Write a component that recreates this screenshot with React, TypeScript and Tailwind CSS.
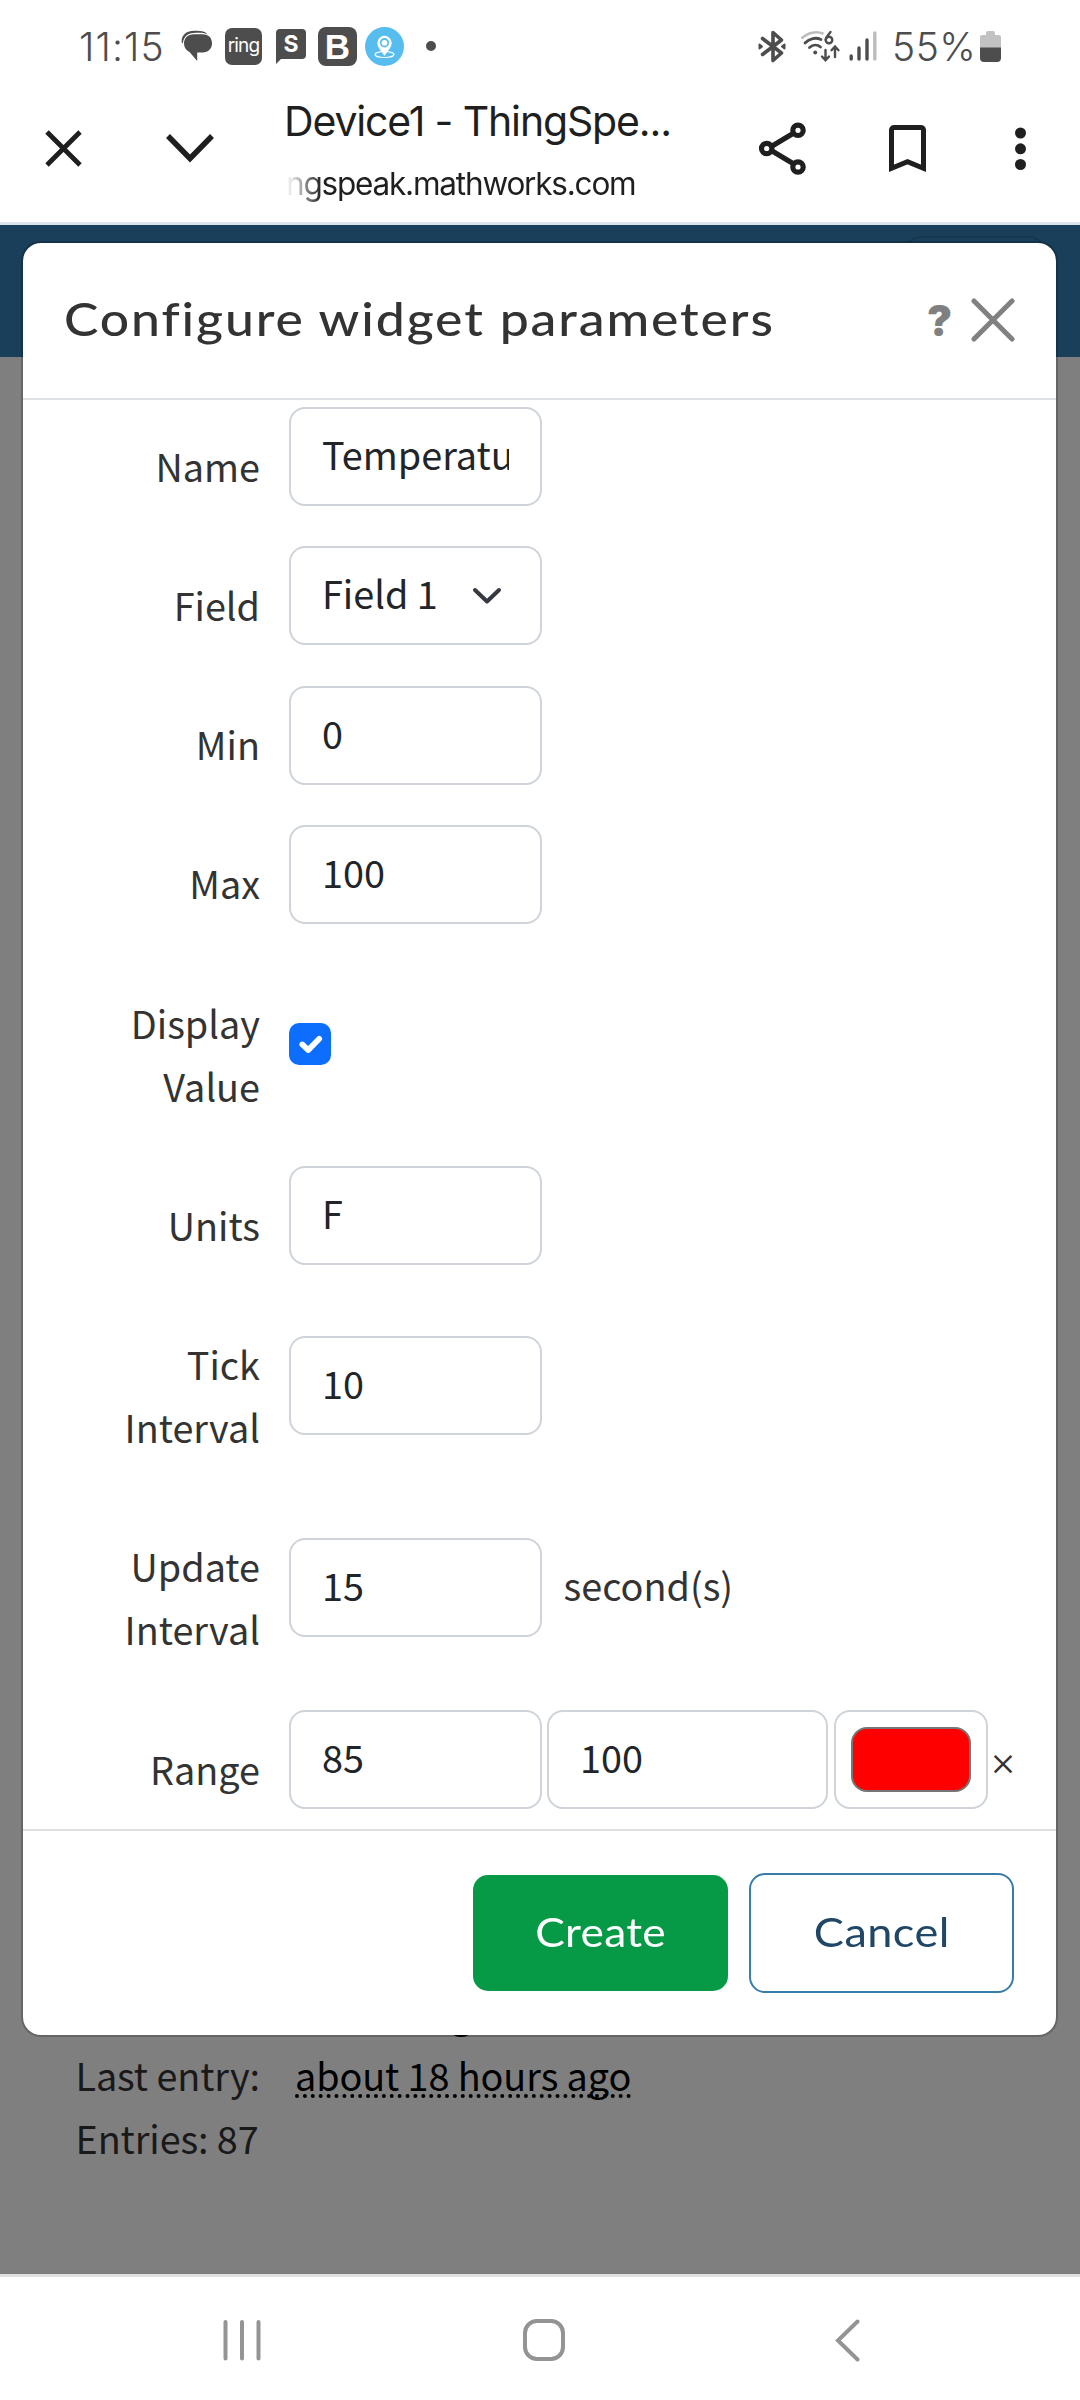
import React from "react";

const ui = "font-['Inter',sans-serif]";

function StatusBar() {
  return (
    <div className={`flex h-[92px] items-center bg-white pl-[79px] text-[#4d4d4d] ${ui}`}>
      <span className="w-[102px] whitespace-nowrap text-[39px] font-light leading-none tracking-[1.100px]">11:15</span>
      <svg className="h-[32px] w-[32px]" viewBox="0 0 32 32">
        <path d="M0.6 11.5C0.6 4.5 6 0.8 13 0.8h3c4.5 0 8.500.8 10.5 3.600C23.500 2.900 21 2.800 18 2.800h-3C8 2.800 2.600 5.500 1.800 13.500C1 13 .6 12.300.6 11.500Z" fill="#4d4d4d" />
        <path d="M12.500 4.200h9C27.800 4.200 31 8 31 13.200s-3.600 9.300-9.400 9.300H16.200V31L8.500 22C5 20.500 3 17.500 3 13.600C3 7.800 7 4.200 12.500 4.200Z" fill="#4d4d4d" />
      </svg>
      <span className="ml-[12px] flex h-[37px] w-[37px] items-center justify-center rounded-[7px] bg-[#4d4d4d] pb-[2px] text-[19px] leading-none tracking-[-0.800px] text-white">ring</span>
      <span className="relative ml-[14px] flex h-[36px] w-[30px] items-start justify-center">
        <svg className="absolute inset-0 h-[36px] w-[30px]" viewBox="0 0 30 36">
          <path d="M4 1h22a4 4 0 0 1 4 4v22a4 4 0 0 1-4 4H5l-5 5V5a4 4 0 0 1 4-4Z" fill="#4d4d4d" />
        </svg>
        <span className="relative mt-[5px] text-[23px] font-bold leading-none text-white">S</span>
      </span>
      <span className="ml-[12px] flex h-[39px] w-[39px] items-center justify-center rounded-[8px] bg-[#4d4d4d] font-['Liberation_Sans',sans-serif] text-[35px] font-bold leading-none text-white">B</span>
      <svg className="ml-[8px] h-[39px] w-[39px]" viewBox="0 0 39 39">
        <circle cx="19.500" cy="19.500" r="19.500" fill="#57bdee" />
        <ellipse cx="19.500" cy="27.500" rx="9.500" ry="3" fill="none" stroke="#fff" strokeWidth="1.200" />
        <path d="M19.500 29C16 23.500 12.300 20 12.300 16a7.200 7.200 0 0 1 14.400 0C26.700 20 23 23.500 19.500 29Z" fill="#fff" />
        <circle cx="19.500" cy="15.800" r="3.800" fill="#fff" stroke="#57bdee" strokeWidth="1.800" />
      </svg>
      <span className="ml-[22px] h-[10px] w-[10px] rounded-full bg-[#4d4d4d]" />
      <svg className="ml-[322px] h-[33px] w-[28px]" viewBox="0 0 28 33" fill="none" stroke="#4d4d4d" strokeWidth="3.600" strokeLinecap="round" strokeLinejoin="round">
        <path d="M4.500 8.500 23.500 23 15 30.500V2.500L23.500 10 4.500 24.500" />
        <path d="M1.500 14.500 4 16.500 1.500 18.500ZM26.500 14.500 24 16.500 26.500 18.500Z" strokeWidth="2" fill="#4d4d4d" />
      </svg>
      <svg className="ml-[13px] h-[34px] w-[42px]" viewBox="0 0 42 34" fill="none" strokeLinecap="round">
        <path d="M2.500 9.500C9 3 18 2 24.500 4.800" stroke="#bdbdbd" strokeWidth="2.600" strokeLinecap="butt" />
        <path d="M6 14C10.500 9 17 8.200 22 10.500" stroke="#4d4d4d" strokeWidth="2.800" />
        <path d="M10.500 18.500C14 15.500 18.500 15.500 21.500 18" stroke="#4d4d4d" strokeWidth="2.800" />
        <circle cx="16.200" cy="23.500" r="2" fill="#4d4d4d" />
        <path d="M31.500 3C29 6 26.800 8.500 26.800 10.800" stroke="#4d4d4d" strokeWidth="2.400" />
        <circle cx="30" cy="11" r="3.300" stroke="#4d4d4d" strokeWidth="2.400" />
        <path d="M26.500 21v10M23 27.500l3.500 3.700 3.500-3.700M36 28V18M32.500 21.200 36 17.500l3.500 3.700" stroke="#4d4d4d" strokeWidth="2.400" />
      </svg>
      <svg className="ml-[8px] h-[30px] w-[28px]" viewBox="0 0 28 30" strokeWidth="3.400" strokeLinecap="round">
        <path d="M2.200 25v3M10 17v11M18 9v19" stroke="#4d4d4d" />
        <path d="M25.800 2v26" stroke="#bdbdbd" />
      </svg>
      <span className="ml-[15px] w-[88px] whitespace-nowrap text-[39px] font-light leading-none tracking-[0.500px]">55%</span>
      <svg className="h-[31px] w-[21px]" viewBox="0 0 21 31">
        <path d="M6 2a2 2 0 0 1 2-2h5a2 2 0 0 1 2 2v2h4a2 2 0 0 1 2 2v11H0V6a2 2 0 0 1 2-2h4Z" fill="#c2c2c2" />
        <path d="M0 16.500h21V27a4 4 0 0 1-4 4H4a4 4 0 0 1-4-4Z" fill="#4d4d4d" />
      </svg>
    </div>
  );
}

function BrowserBar() {
  return (
    <div className={`flex h-[133px] border-b-[3px] border-[#dbe4ed] bg-white text-[#1f1f1f] ${ui}`}>
      <svg className="ml-[45px] mt-[38px] h-[37px] w-[37px]" viewBox="0 0 37 37" stroke="#1f1f1f" strokeWidth="4.800">
        <path d="M2 2 35 35M35 2 2 35" />
      </svg>
      <svg className="ml-[83px] mt-[41px] h-[31px] w-[50px]" viewBox="0 0 50 31" fill="none" stroke="#1f1f1f" strokeWidth="5.500">
        <path d="M3 3 25 25.500 47 3" />
      </svg>
      <div className="ml-[69px] w-[399px]">
        <div className="mt-[4px] whitespace-nowrap text-[41px] leading-[50px] tracking-[-1.150px]">Device1 - ThingSpe...</div>
        <div className="ml-[2px] mt-[16px] whitespace-nowrap bg-linear-to-r from-[#ffffff] from-0% via-[#a8a8a8] via-4% to-[#1f1f1f] to-9% bg-clip-text text-[31.500px] leading-[44px] tracking-[-1.200px] text-transparent">ngspeak.mathworks.com</div>
      </div>
      <svg className="ml-[75px] mt-[29px] h-[56px] w-[50px]" viewBox="0 0 50 56" fill="none" stroke="#1f1f1f" strokeWidth="5.200">
        <path d="M10 27.500 40 9.500M10 27.500 40 45.500" />
        <circle cx="40" cy="9.300" r="5.200" fill="#fff" />
        <circle cx="8.700" cy="27.500" r="5.200" fill="#fff" />
        <circle cx="40" cy="46" r="5.200" fill="#fff" />
      </svg>
      <svg className="ml-[81px] mt-[33px] h-[47px] w-[37px]" viewBox="0 0 37 47" fill="none" stroke="#1f1f1f" strokeWidth="5">
        <path d="M2.500 43.200V5a2.500 2.500 0 0 1 2.500-2.500h27a2.500 2.500 0 0 1 2.500 2.500v38.200L18.500 36.800Z" />
      </svg>
      <svg className="ml-[89px] mt-[35px] h-[44px] w-[11px]" viewBox="0 0 11 44" fill="#1f1f1f">
        <circle cx="5.500" cy="6" r="5.500" />
        <circle cx="5.500" cy="21.800" r="5.500" />
        <circle cx="5.500" cy="37.500" r="5.500" />
      </svg>
    </div>
  );
}

const box = "h-[99px] shrink-0 overflow-hidden rounded-[16px] border-2 border-[#ced4da] bg-white px-[31px] leading-[90px] text-[#212529]";

function Row({ label, children, tall, drop }: { label: string; children: React.ReactNode; tall?: boolean; drop?: boolean }) {
  return (
    <div className={tall ? "flex h-[202.300px] items-start" : "flex h-[139.250px] items-start"}>
      <div className="ml-[80px] mr-[29px] mt-[26.500px] w-[157px] shrink-0 text-right leading-[63px]">{label}</div>
      <div className={drop ? "mt-[30.500px] flex items-start" : "flex items-start"}>{children}</div>
    </div>
  );
}

function Field({ value }: { value: string }) {
  return (
    <div className={`${box} w-[253px]`}>
      <div className="overflow-hidden whitespace-nowrap">{value}</div>
    </div>
  );
}

export default function App() {
  return (
    <div className="flex h-[2400px] w-[1080px] flex-col overflow-hidden bg-white font-['Noto_Sans_CJK_SC',sans-serif] text-[37.800px] text-[#333333]">
      <StatusBar />
      <BrowserBar />
      <div className="relative flex h-[2049px] flex-col bg-[#7f7f7f]">
        <div className="h-[132px] bg-[#193f5a]">
          <div className="ml-[905px] mt-[11px] h-[60px] w-[140px] rounded-[16px] border-2 border-[#15384f]" />
        </div>
        <div className="ml-[75.500px] mt-[1608px] text-[#191919]">
          <div className="flex h-[78px] items-start pl-[375px] pt-[22px] leading-[50px] text-black">g</div>
          <div className="flex h-[63px] items-start leading-[63px]">
            <span className="w-[219.500px] whitespace-nowrap tracking-[-0.100px]">Last entry:</span>
            <span className="whitespace-nowrap tracking-[-0.100px] text-black underline decoration-dotted decoration-[4px] underline-offset-[3px] [text-decoration-skip-ink:none]">about 18 hours ago</span>
          </div>
          <div className="leading-[63px] tracking-[-0.100px]">Entries: 87</div>
        </div>
        <div className="absolute left-[21px] top-[16px] flex h-[1796px] w-[1037px] flex-col overflow-hidden rounded-[20px] border-2 border-black/20 bg-white bg-clip-padding">
          <div className="flex h-[157px] shrink-0 items-center border-b-2 border-[#dee2e6] pl-[41px] font-['Lato',sans-serif]">
            <h1 className="w-[863px] origin-left scale-x-[1.1] whitespace-nowrap pb-[4px] text-[47px] font-medium tracking-[1.700px] text-[#333333]">Configure widget parameters</h1>
            <span className="w-[44px] pb-[1px] font-['Inter',sans-serif] text-[42px] font-black text-[#808080]">?</span>
            <svg className="-mt-[2px] h-[44px] w-[44px]" viewBox="0 0 44 44" stroke="#808080" strokeWidth="5" strokeLinecap="round">
              <path d="M3 3 41 41M41 3 3 41" />
            </svg>
          </div>
          <div className="h-[1429px] shrink-0 overflow-hidden pt-[7px]">
            <Row label="Name"><Field value="Temperature" /></Row>
            <Row label="Field">
              <div className={`${box} flex w-[253px] justify-between`}>
                <span>Field 1</span>
                <svg className="mr-[7px] mt-[39px] h-[18px] w-[30px]" viewBox="0 0 30 18" fill="none" stroke="#343a40" strokeWidth="4" strokeLinecap="round" strokeLinejoin="round">
                  <path d="M3 3 15 14.500 27 3" />
                </svg>
              </div>
            </Row>
            <Row label="Min"><Field value="0" /></Row>
            <Row label="Max"><Field value="100" /></Row>
            <Row label="Display Value" tall>
              <div className="mt-[59px] flex h-[42px] w-[42px] items-center justify-center rounded-[10px] bg-[#0d6efd]">
                <svg className="h-[42px] w-[42px]" viewBox="0 0 20 20" fill="none" stroke="#fff" strokeWidth="2.700" strokeLinecap="round" strokeLinejoin="round">
                  <path d="m6.300 10.200 2.900 2.700 5.200-5.400" />
                </svg>
              </div>
            </Row>
            <Row label="Units"><Field value="F" /></Row>
            <Row label="Tick Interval" tall drop><Field value="10" /></Row>
            <Row label="Update Interval" tall drop>
              <Field value="15" />
              <span className="ml-[21.500px] leading-[94px]">second(s)</span>
            </Row>
            <Row label="Range">
              <Field value="85" />
              <div className={`${box} ml-[5px] w-[281px]`}>100</div>
              <div className="ml-[6px] h-[99px] w-[154px] shrink-0 rounded-[16px] border-2 border-[#ced4da] px-[15px] pt-[15px]">
                <div className="h-[65px] rounded-[16px] border-2 border-[#767676] bg-[#ff0000]" />
              </div>
              <span className="ml-[1px] mt-[7px] text-[28px] font-medium leading-[93px]">×</span>
            </Row>
          </div>
          <div className="flex grow items-start border-t-2 border-[#dfdfdf] font-['Lato',sans-serif] text-[41px]">
            <div className="ml-[450px] mt-[44px] h-[116px] w-[255px] rounded-[15px] bg-[#079a46] text-center leading-[114px] text-white">
              <span className="inline-block scale-x-[1.08] tracking-[0.300px]">Create</span>
            </div>
            <div className="ml-[21px] mt-[42px] h-[120px] w-[265px] rounded-[16px] border-2 border-[#3a7ca8] text-center leading-[114px] text-[#204766]">
              <span className="inline-block scale-x-[1.1] tracking-[0.400px]">Cancel</span>
            </div>
          </div>
        </div>
      </div>
      <div className="flex h-[126px] border-t-[3px] border-[#e0e0e0] bg-white">
        <svg className="ml-[223px] mt-[43px] h-[41px] w-[38px]" viewBox="0 0 38 41" stroke="#949494" strokeWidth="4" strokeLinecap="round">
          <path d="M2.500 2v36.500M19 2v36.500M35.500 2v36.500" />
        </svg>
        <svg className="ml-[262px] mt-[42px] h-[42px] w-[42px]" viewBox="0 0 42 42" fill="none" stroke="#949494" strokeWidth="4">
          <rect x="2" y="2" width="38" height="38" rx="12" />
        </svg>
        <svg className="ml-[270px] mt-[42px] h-[43px] w-[26px]" viewBox="0 0 26 43" fill="none" stroke="#949494" strokeWidth="4" strokeLinecap="round">
          <path d="M22.500 2.500 3 21.500 22.500 40.500" />
        </svg>
      </div>
    </div>
  );
}
